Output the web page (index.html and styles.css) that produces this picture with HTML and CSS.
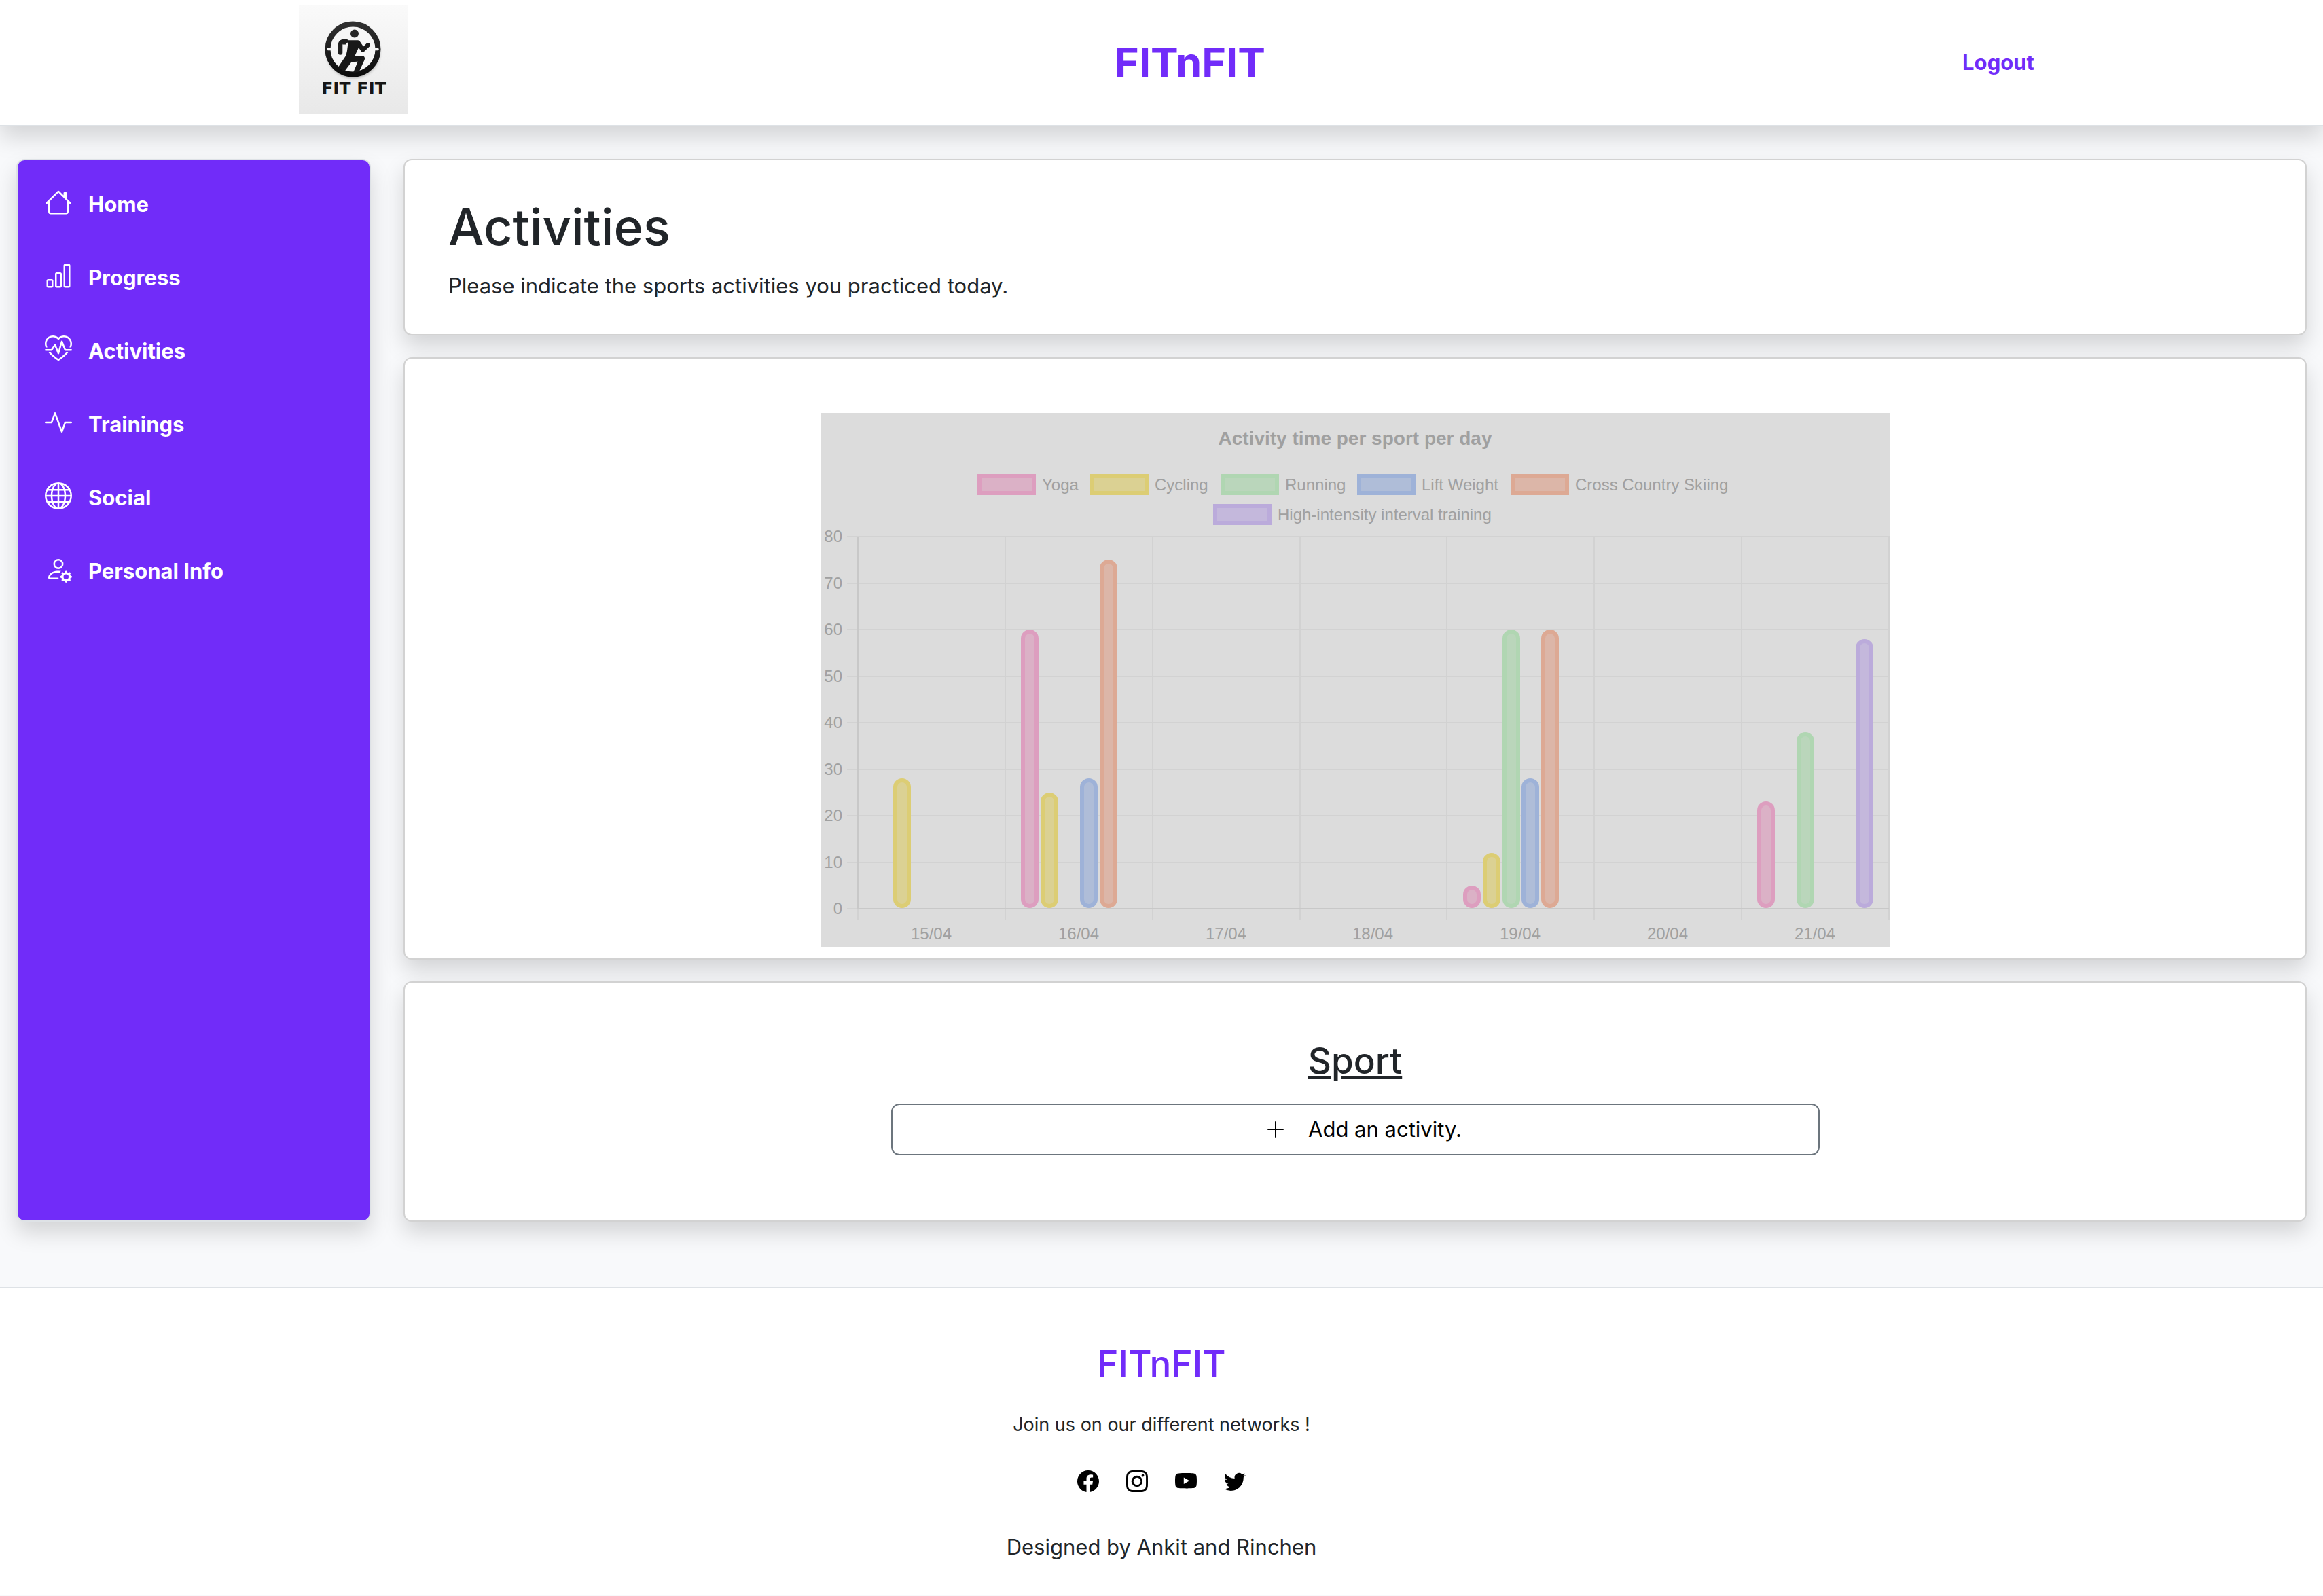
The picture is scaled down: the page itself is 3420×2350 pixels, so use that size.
FILE: index.html
```html
<!DOCTYPE html>
<html lang="en">
<head>
<meta charset="utf-8">
<title>FITnFIT - Activities</title>
<link rel="stylesheet" href="styles.css">
</head>
<body>
<header class="topbar">
  <a class="logo" href="#" aria-label="FIT FIT">
    <svg viewBox="0 0 160 160" width="160" height="160">
      <defs>
        <linearGradient id="paper" x1="0" y1="0" x2="0" y2="1"><stop offset="0" stop-color="#fafafa"/><stop offset="1" stop-color="#e8e8e8"/></linearGradient>
        <linearGradient id="ink" x1="0" y1="0" x2="0" y2="1"><stop offset="0" stop-color="#303030"/><stop offset="1" stop-color="#0c0c0c"/></linearGradient>
        <filter id="soft" x="-20%" y="-20%" width="140%" height="140%"><feGaussianBlur stdDeviation="2"/></filter>
      </defs>
      <rect width="160" height="160" fill="url(#paper)"/>
      <circle cx="80" cy="68" r="39" fill="#a8a8a8" filter="url(#soft)"/>
      <circle cx="79.500" cy="64.500" r="37" fill="#f6f6f6" stroke="url(#ink)" stroke-width="8"/>
      <path d="M43 64.500h8M108 64.500h8" stroke="#f6f6f6" stroke-width="3.600" stroke-linecap="round"/>
      <circle cx="82" cy="41.500" r="6" fill="#262626"/>
      <path d="M61 69.500V58q0-5.500 8-5.500" fill="none" stroke="#202020" stroke-width="6.600" stroke-linecap="round"/>
      <path d="M64.500 57.500h5v-7.500h-2z" fill="#202020"/>
      <path d="M72.500 51.300H87q2 0 3 2l5 7.200 4.500-4.500q2.500-2 4.500 0t0 4.500l-8 7.500q-2 2-4 0l-4-6-5.500 12H93q5.500 1 3.500 6.500L88.500 98l-8.500 1 6.700-16.200-9.200.5L66.500 98 58.500 90l10-15q3-5 4-23.700z" fill="#181818"/>
      <text class="logo-text" x="81" y="131" text-anchor="middle">FIT FIT</text>
    </svg>
  </a>
  <div class="topbar-title">FITnFIT</div>
  <a class="logout" href="#">Logout</a>
</header>

<div class="layout">
  <nav class="card sidebar" aria-label="Main">
    <a class="nav-item" href="#"><svg class="nav-icon" viewBox="0 0 16 16"><path d="M8.707 1.5a1 1 0 0 0-1.414 0L.646 8.146a.5.5 0 0 0 .708.708L2 8.207V13.5A1.500 1.500 0 0 0 3.500 15h9a1.500 1.500 0 0 0 1.500-1.500V8.207l.646.647a.5.5 0 0 0 .708-.708L13 5.793V2.500a.5.5 0 0 0-.5-.5h-1a.5.5 0 0 0-.5.5v1.293zM13 7.207V13.500a.5.5 0 0 1-.5.5h-9a.5.5 0 0 1-.5-.5V7.207l5-5z" fill-rule="evenodd"/></svg>Home</a>
    <a class="nav-item" href="#"><svg class="nav-icon" viewBox="0 0 16 16"><path d="M4 11H2v3h2zm5-4H7v7h2zm5-5v12h-2V2zm-2-1a1 1 0 0 0-1 1v12a1 1 0 0 0 1 1h2a1 1 0 0 0 1-1V2a1 1 0 0 0-1-1zM6 7a1 1 0 0 1 1-1h2a1 1 0 0 1 1 1v7a1 1 0 0 1-1 1H7a1 1 0 0 1-1-1zm-5 4a1 1 0 0 1 1-1h2a1 1 0 0 1 1 1v3a1 1 0 0 1-1 1H2a1 1 0 0 1-1-1z" fill-rule="evenodd"/></svg>Progress</a>
    <a class="nav-item" href="#"><svg class="nav-icon" viewBox="0 0 16 16"><path d="m8 2.748-.717-.737C5.600.281 2.514.878 1.400 3.053.918 3.995.78 5.323 1.508 7H.43c-2.128-5.697 4.165-8.830 7.394-5.857q.09.083.176.171a3 3 0 0 1 .176-.17c3.230-2.974 9.522.159 7.394 5.856h-1.078c.728-1.677.59-3.005.108-3.947C13.486.878 10.400.28 8.717 2.010zM2.212 10h1.315C4.593 11.183 6.050 12.458 8 13.795c1.949-1.337 3.407-2.612 4.473-3.795h1.315c-1.265 1.566-3.140 3.250-5.788 5-2.648-1.750-4.523-3.434-5.788-5"/><path d="M10.464 3.314a.5.5 0 0 0-.945.049L7.921 8.956 6.464 5.314a.5.5 0 0 0-.88-.091L3.732 8H.5a.5.5 0 0 0 0 1H4a.5.5 0 0 0 .416-.223l1.473-2.209 1.647 4.118a.5.5 0 0 0 .945-.049l1.598-5.593 1.457 3.642A.5.5 0 0 0 12 9h3.500a.5.5 0 0 0 0-1h-3.162z"/></svg>Activities</a>
    <a class="nav-item" href="#"><svg class="nav-icon" viewBox="0 0 16 16"><path d="M6 2a.5.5 0 0 1 .47.33L10 12.036l1.530-4.208A.5.5 0 0 1 12 7.500h3.500a.5.5 0 0 1 0 1h-3.150l-1.880 5.170a.5.5 0 0 1-.94 0L6 3.964 4.470 8.171A.5.5 0 0 1 4 8.500H.5a.5.5 0 0 1 0-1h3.150l1.880-5.170A.5.5 0 0 1 6 2"/></svg>Trainings</a>
    <a class="nav-item" href="#"><svg class="nav-icon" viewBox="0 0 16 16"><path d="M0 8a8 8 0 1 1 16 0A8 8 0 0 1 0 8m7.500-6.923c-.67.204-1.335.82-1.887 1.855A8 8 0 0 0 5.145 4H7.500zM4.090 4a9.300 9.300 0 0 1 .64-1.539 7 7 0 0 1 .597-.933A7.030 7.030 0 0 0 2.255 4zm-.582 3.500c.03-.877.138-1.718.312-2.500H1.674a7 7 0 0 0-.656 2.500zM4.847 5a12.500 12.500 0 0 0-.338 2.500H7.500V5zM8.500 5v2.500h2.990a12.500 12.500 0 0 0-.337-2.500zM4.510 8.500a12.500 12.500 0 0 0 .337 2.500H7.500V8.500zm3.990 0V11h2.653c.187-.765.306-1.608.338-2.500zM5.145 12q.208.58.468 1.068c.552 1.035 1.218 1.650 1.887 1.855V12zm.182 2.472a7 7 0 0 1-.597-.933A9.300 9.300 0 0 1 4.090 12H2.255a7 7 0 0 0 3.072 2.472M3.820 11a13.700 13.700 0 0 1-.312-2.500h-2.490c.062.89.291 1.733.656 2.500zm6.853 3.472A7 7 0 0 0 13.745 12H11.910a9.300 9.300 0 0 1-.64 1.539 7 7 0 0 1-.597.933M8.500 12v2.923c.67-.204 1.335-.82 1.887-1.855q.26-.487.468-1.068zm3.680-1h2.146c.365-.767.594-1.610.656-2.500h-2.490a13.700 13.700 0 0 1-.312 2.500m2.802-3.500a7 7 0 0 0-.656-2.500H12.180c.174.782.282 1.623.312 2.500zM11.270 2.461c.247.464.462.98.64 1.539h1.835a7 7 0 0 0-3.072-2.472c.218.284.418.598.597.933M10.855 4a8 8 0 0 0-.468-1.068C9.835 1.897 9.170 1.282 8.500 1.077V4z"/></svg>Social</a>
    <a class="nav-item" href="#"><svg class="nav-icon" viewBox="0 0 16 16"><path d="M11 5a3 3 0 1 1-6 0 3 3 0 0 1 6 0M8 7a2 2 0 1 0 0-4 2 2 0 0 0 0 4m.256 7a4.500 4.500 0 0 1-.229-1.004H3c.001-.246.154-.986.832-1.664C4.484 10.680 5.711 10 8 10q.39 0 .74.025c.226-.341.496-.65.804-.918Q8.844 9.002 8 9c-5 0-6 3-6 4s1 1 1 1zm3.630-4.540c.18-.613 1.048-.613 1.229 0l.043.148a.64.64 0 0 0 .921.382l.136-.074c.561-.306 1.175.308.87.869l-.075.136a.64.64 0 0 0 .382.92l.149.045c.612.18.612 1.048 0 1.229l-.15.043a.64.64 0 0 0-.38.921l.074.136c.305.561-.309 1.175-.87.87l-.136-.075a.64.64 0 0 0-.92.382l-.045.149c-.18.612-1.048.612-1.229 0l-.043-.15a.64.64 0 0 0-.921-.38l-.136.074c-.561.305-1.175-.309-.87-.87l.075-.136a.64.64 0 0 0-.382-.92l-.148-.045c-.613-.18-.613-1.048 0-1.229l.148-.043a.64.64 0 0 0 .382-.921l-.074-.136c-.306-.561.308-1.175.869-.87l.136.075a.64.64 0 0 0 .92-.382zM14 12.500a1.500 1.500 0 1 0-3 0 1.500 1.500 0 0 0 3 0"/></svg>Personal Info</a>
  </nav>

  <main class="content">
    <section class="card intro">
      <h1 class="page-title">Activities</h1>
      <p class="lead">Please indicate the sports activities you practiced today.</p>
    </section>

    <section class="card chart-card">
      <svg class="chart" viewBox="0 0 1574 787" role="img" aria-label="Activity time per sport per day">
        <rect class="chart-bg" width="1574" height="787"/>
        <text class="chart-title" x="787" y="47">Activity time per sport per day</text>

        <g class="legend">
          <rect class="yoga" x="234" y="93" width="80" height="25"/><text x="326" y="114">Yoga</text>
          <rect class="cycling" x="400" y="93" width="80" height="25"/><text x="492" y="114">Cycling</text>
          <rect class="running" x="592" y="93" width="80" height="25"/><text x="684" y="114">Running</text>
          <rect class="lift" x="793" y="93" width="80" height="25"/><text x="885" y="114">Lift Weight</text>
          <rect class="ski" x="1019" y="93" width="80" height="25"/><text x="1111" y="114">Cross Country Skiing</text>
          <rect class="hiit" x="581" y="137" width="80" height="25"/><text x="673" y="158">High-intensity interval training</text>
        </g>

        <path class="grid" d="M39 182H1574M39 251H1574M39 319H1574M39 388H1574M39 456H1574M39 525H1574M39 593H1574M39 662H1574M39 730H1574"/>
        <path class="grid" d="M55 182V746M272 182V746M489 182V746M706 182V746M922 182V746M1139 182V746M1356 182V746M1573 182V746"/>
        <path class="axis" d="M55 182V730M55 730H1573"/>

        <g class="y-labels">
          <text x="32" y="190">80</text><text x="32" y="259">70</text><text x="32" y="327">60</text>
          <text x="32" y="396">50</text><text x="32" y="464">40</text><text x="32" y="533">30</text>
          <text x="32" y="601">20</text><text x="32" y="670">10</text><text x="32" y="738">0</text>
        </g>
        <g class="x-labels">
          <text x="163" y="775">15/04</text><text x="380" y="775">16/04</text><text x="597" y="775">17/04</text>
          <text x="813" y="775">18/04</text><text x="1030" y="775">19/04</text><text x="1247" y="775">20/04</text>
          <text x="1464" y="775">21/04</text>
        </g>

        <g class="bars">
          <rect class="cycling" x="110" y="541" width="20" height="185" rx="10"/>
          <rect class="yoga" x="298" y="322" width="20" height="404" rx="10"/>
          <rect class="cycling" x="327" y="562" width="20" height="164" rx="10"/>
          <rect class="lift" x="385" y="541" width="20" height="185" rx="10"/>
          <rect class="ski" x="414" y="219" width="20" height="507" rx="10"/>
          <rect class="yoga" x="949" y="699" width="20" height="27" rx="10"/>
          <rect class="cycling" x="978" y="651" width="20" height="75" rx="10"/>
          <rect class="running" x="1007" y="322" width="20" height="404" rx="10"/>
          <rect class="lift" x="1035" y="541" width="20" height="185" rx="10"/>
          <rect class="ski" x="1064" y="322" width="20" height="404" rx="10"/>
          <rect class="yoga" x="1382" y="575" width="20" height="151" rx="10"/>
          <rect class="running" x="1440" y="473" width="20" height="253" rx="10"/>
          <rect class="hiit" x="1527" y="336" width="20" height="390" rx="10"/>
        </g>
      </svg>
    </section>

    <section class="card sport">
      <h2 class="sport-title">Sport</h2>
      <button class="add-button" type="button"><svg class="plus" viewBox="0 0 16 16"><path d="M8 2a.5.5 0 0 1 .5.5v5h5a.5.5 0 0 1 0 1h-5v5a.5.5 0 0 1-1 0v-5h-5a.5.5 0 0 1 0-1h5v-5A.5.5 0 0 1 8 2"/></svg>Add an activity.</button>
    </section>
  </main>
</div>

<footer class="footer">
  <h2 class="footer-title">FITnFIT</h2>
  <p class="join">Join us on our different networks !</p>
  <div class="socials">
    <a href="#" aria-label="Facebook"><svg viewBox="0 0 16 16"><path d="M16 8.049c0-4.446-3.582-8.050-8-8.050C3.580 0-.002 3.603-.002 8.050c0 4.017 2.926 7.347 6.750 7.951v-5.625h-2.030V8.050H6.750V6.275c0-2.017 1.195-3.131 3.022-3.131.876 0 1.791.157 1.791.157v1.980h-1.009c-.993 0-1.303.621-1.303 1.258v1.510h2.218l-.354 2.326H9.250V16c3.824-.604 6.750-3.934 6.750-7.951"/></svg></a>
    <a href="#" aria-label="Instagram"><svg viewBox="0 0 16 16"><path d="M8 0C5.829 0 5.556.01 4.703.048 3.850.088 3.269.222 2.760.42a3.900 3.900 0 0 0-1.417.923A3.900 3.900 0 0 0 .42 2.760C.222 3.268.087 3.850.048 4.700.01 5.555 0 5.827 0 8.001c0 2.172.01 2.444.048 3.297.04.852.174 1.433.372 1.942.205.526.478.972.923 1.417.444.445.89.719 1.416.923.51.198 1.090.333 1.942.372C5.555 15.990 5.827 16 8 16s2.444-.01 3.298-.048c.851-.04 1.434-.174 1.943-.372a3.900 3.900 0 0 0 1.416-.923c.445-.445.718-.891.923-1.417.197-.509.332-1.090.372-1.942C15.990 10.445 16 10.173 16 8s-.01-2.445-.048-3.299c-.04-.851-.175-1.433-.372-1.941a3.900 3.900 0 0 0-.923-1.417A3.900 3.900 0 0 0 13.240.42c-.51-.198-1.092-.333-1.943-.372C10.443.01 10.172 0 7.998 0zm-.717 1.442h.718c2.136 0 2.389.007 3.232.046.78.035 1.204.166 1.486.275.373.145.64.319.92.599s.453.546.598.92c.11.281.24.705.275 1.485.039.843.047 1.096.047 3.231s-.008 2.389-.047 3.232c-.035.78-.166 1.203-.275 1.485a2.500 2.500 0 0 1-.599.919c-.28.28-.546.453-.92.598-.28.11-.704.24-1.485.276-.843.038-1.096.047-3.232.047s-2.390-.009-3.233-.047c-.78-.036-1.203-.166-1.485-.276a2.500 2.500 0 0 1-.92-.598 2.500 2.500 0 0 1-.6-.92c-.109-.281-.24-.705-.275-1.485-.038-.843-.046-1.096-.046-3.233s.008-2.388.046-3.231c.036-.78.166-1.204.276-1.486.145-.373.319-.64.599-.92s.546-.453.92-.598c.282-.11.705-.24 1.485-.276.738-.034 1.024-.044 2.515-.045zm4.988 1.328a.96.96 0 1 0 0 1.920.96.96 0 0 0 0-1.920m-4.270 1.122a4.109 4.109 0 1 0 0 8.217 4.109 4.109 0 0 0 0-8.217m0 1.441a2.667 2.667 0 1 1 0 5.334 2.667 2.667 0 0 1 0-5.334"/></svg></a>
    <a href="#" aria-label="YouTube"><svg viewBox="0 0 16 16"><path d="M8.051 1.999h.089c.822.003 4.987.033 6.110.335a2.010 2.010 0 0 1 1.415 1.420c.101.38.172.883.22 1.402l.01.104.022.26.008.104c.065.914.073 1.770.074 1.957v.075c-.001.194-.01 1.108-.082 2.060l-.008.105-.009.104c-.05.572-.124 1.140-.235 1.558a2.010 2.010 0 0 1-1.415 1.420c-1.160.312-5.569.334-6.180.335h-.142c-.309 0-1.587-.006-2.927-.052l-.17-.006-.087-.004-.171-.007-.171-.007c-1.110-.049-2.167-.128-2.654-.26a2.010 2.010 0 0 1-1.415-1.419c-.111-.417-.185-.986-.235-1.558L.09 9.820l-.008-.104A31 31 0 0 1 0 7.680v-.123c.002-.215.01-.958.064-1.778l.007-.103.003-.052.008-.104.022-.26.010-.104c.048-.519.119-1.023.22-1.402a2.010 2.010 0 0 1 1.415-1.420c.487-.13 1.544-.21 2.654-.26l.17-.007.172-.006.086-.003.171-.007A100 100 0 0 1 7.858 2zM6.400 5.209v4.818l4.157-2.408z"/></svg></a>
    <a href="#" aria-label="Twitter"><svg viewBox="0 0 16 16"><path d="M5.026 15c6.038 0 9.341-5.003 9.341-9.334q.002-.211-.006-.422A6.700 6.700 0 0 0 16 3.542a6.700 6.700 0 0 1-1.889.518 3.300 3.300 0 0 0 1.447-1.817 6.500 6.500 0 0 1-2.087.793A3.286 3.286 0 0 0 7.875 6.030a9.320 9.320 0 0 1-6.767-3.429 3.290 3.290 0 0 0 1.018 4.382A3.300 3.300 0 0 1 .64 6.575v.045a3.290 3.290 0 0 0 2.632 3.218 3.200 3.200 0 0 1-.865.115 3 3 0 0 1-.614-.057 3.280 3.280 0 0 0 3.067 2.277A6.600 6.600 0 0 1 .78 13.580a6 6 0 0 1-.78-.045A9.340 9.340 0 0 0 5.026 15"/></svg></a>
  </div>
  <p class="credits">Designed by Ankit and Rinchen</p>
</footer>
</body>
</html>
```
FILE: styles.css
```css
* {
  box-sizing: border-box;
}

body {
  margin: 0;
  background: #f8f9fb;
  color: #212529;
  font-family: Inter, "Liberation Sans", sans-serif;
  font-size: 31px;
  line-height: 48px;
}

h1, h2, p {
  margin: 0;
}

a {
  color: inherit;
  text-decoration: none;
}

/* Header */
.topbar {
  display: grid;
  grid-template-columns: 1040fr 1424fr 956fr;
  align-items: center;
  justify-items: center;
  background: #fff;
  border-bottom: 2px solid #dee2e6;
  box-shadow: 0 16px 32px rgba(0, 0, 0, 0.15);
}

.logo {
  padding: 8px 0 16px;
}

.logo svg {
  display: block;
}

.logo-text {
  font-family: "DejaVu Sans", sans-serif;
  font-size: 25px;
  font-weight: 700;
  fill: #151515;
}

.topbar-title {
  color: #712cf9;
  font-size: 61px;
  font-weight: 700;
  line-height: 76px;
}

.logout {
  color: #712cf9;
  font-weight: 700;
}

/* Page body */
.layout {
  display: grid;
  grid-template-columns: 1fr 5fr;
  padding: 48px 0 96px;
}

.card {
  background: #fff;
  border: 2px solid #d2d2d2;
  border-radius: 12px;
  box-shadow: 0 16px 32px rgba(0, 0, 0, 0.15);
}

.sidebar {
  display: flex;
  flex-direction: column;
  gap: 60px;
  margin: 0 24px;
  padding: 41px 40px;
  background: #712cf9;
  border-color: #dee2e6;
}

.nav-item {
  display: flex;
  align-items: center;
  gap: 24px;
  color: #fff;
  font-weight: 700;
}

.nav-icon {
  width: 40px;
  height: 40px;
  margin-bottom: 6px;
  fill: currentColor;
}

.content {
  display: flex;
  flex-direction: column;
  gap: 32px;
  margin: 0 24px;
}

.intro {
  padding: 50px 64px 47px;
}

.page-title {
  margin-bottom: 15px;
  font-size: 74px;
  font-weight: 500;
  line-height: 96px;
}

/* Chart */
.chart-card {
  display: flex;
  justify-content: center;
  padding: 80px 32px 16px;
}

.chart {
  display: block;
  width: 1574px;
  max-width: 100%;
  font-family: "Liberation Sans", Arial, sans-serif;
  font-size: 24px;
  fill: #a0a0a0;
}

.chart-bg {
  fill: #dcdcdc;
}

.chart-title {
  font-size: 28px;
  font-weight: 700;
  text-anchor: middle;
}

.grid,
.axis {
  fill: none;
  stroke: #d2d2d2;
  stroke-width: 2;
}

.axis {
  stroke: #c8c8c8;
}

.y-labels {
  text-anchor: end;
}

.x-labels {
  text-anchor: middle;
}

.legend rect,
.bars rect {
  stroke-width: 6;
}

.yoga { fill: #dbb1c6; stroke: #dd9ebf; }
.cycling { fill: #dbd193; stroke: #dccd74; }
.running { fill: #bad6bb; stroke: #b0d6b2; }
.lift { fill: #afbdd8; stroke: #9eb2d8; }
.ski { fill: #dcb6a8; stroke: #dda994; }
.hiit { fill: #c4b8dc; stroke: #bbabdb; }

/* Sport */
.sport {
  display: flex;
  flex-direction: column;
  align-items: center;
  gap: 30px;
  padding: 82px 32px 96px;
}

.sport-title {
  font-size: 53px;
  font-weight: 500;
  line-height: 66px;
  text-decoration: underline;
}

.add-button {
  display: flex;
  align-items: center;
  justify-content: center;
  gap: 32px;
  width: 50%;
  padding: 12px 24px 12px 48px;
  background: transparent;
  border: 2px solid #6c757d;
  border-radius: 12px;
  color: #000;
  font: inherit;
}

.plus {
  width: 32px;
  height: 32px;
  fill: currentColor;
}

/* Footer */
.footer {
  display: flex;
  flex-direction: column;
  align-items: center;
  padding: 78px 24px 47px;
  background: #fff;
  border-top: 2px solid #dee2e6;
}

.footer-title {
  margin-bottom: 36px;
  color: #712cf9;
  font-size: 53px;
  font-weight: 500;
  line-height: 66px;
}

.join {
  margin-bottom: 46px;
  font-size: 27px;
  line-height: 42px;
}

.socials {
  display: flex;
  gap: 40px;
  margin-bottom: 57px;
  color: #000;
}

.socials svg {
  display: block;
  width: 32px;
  height: 32px;
  fill: currentColor;
}
```
